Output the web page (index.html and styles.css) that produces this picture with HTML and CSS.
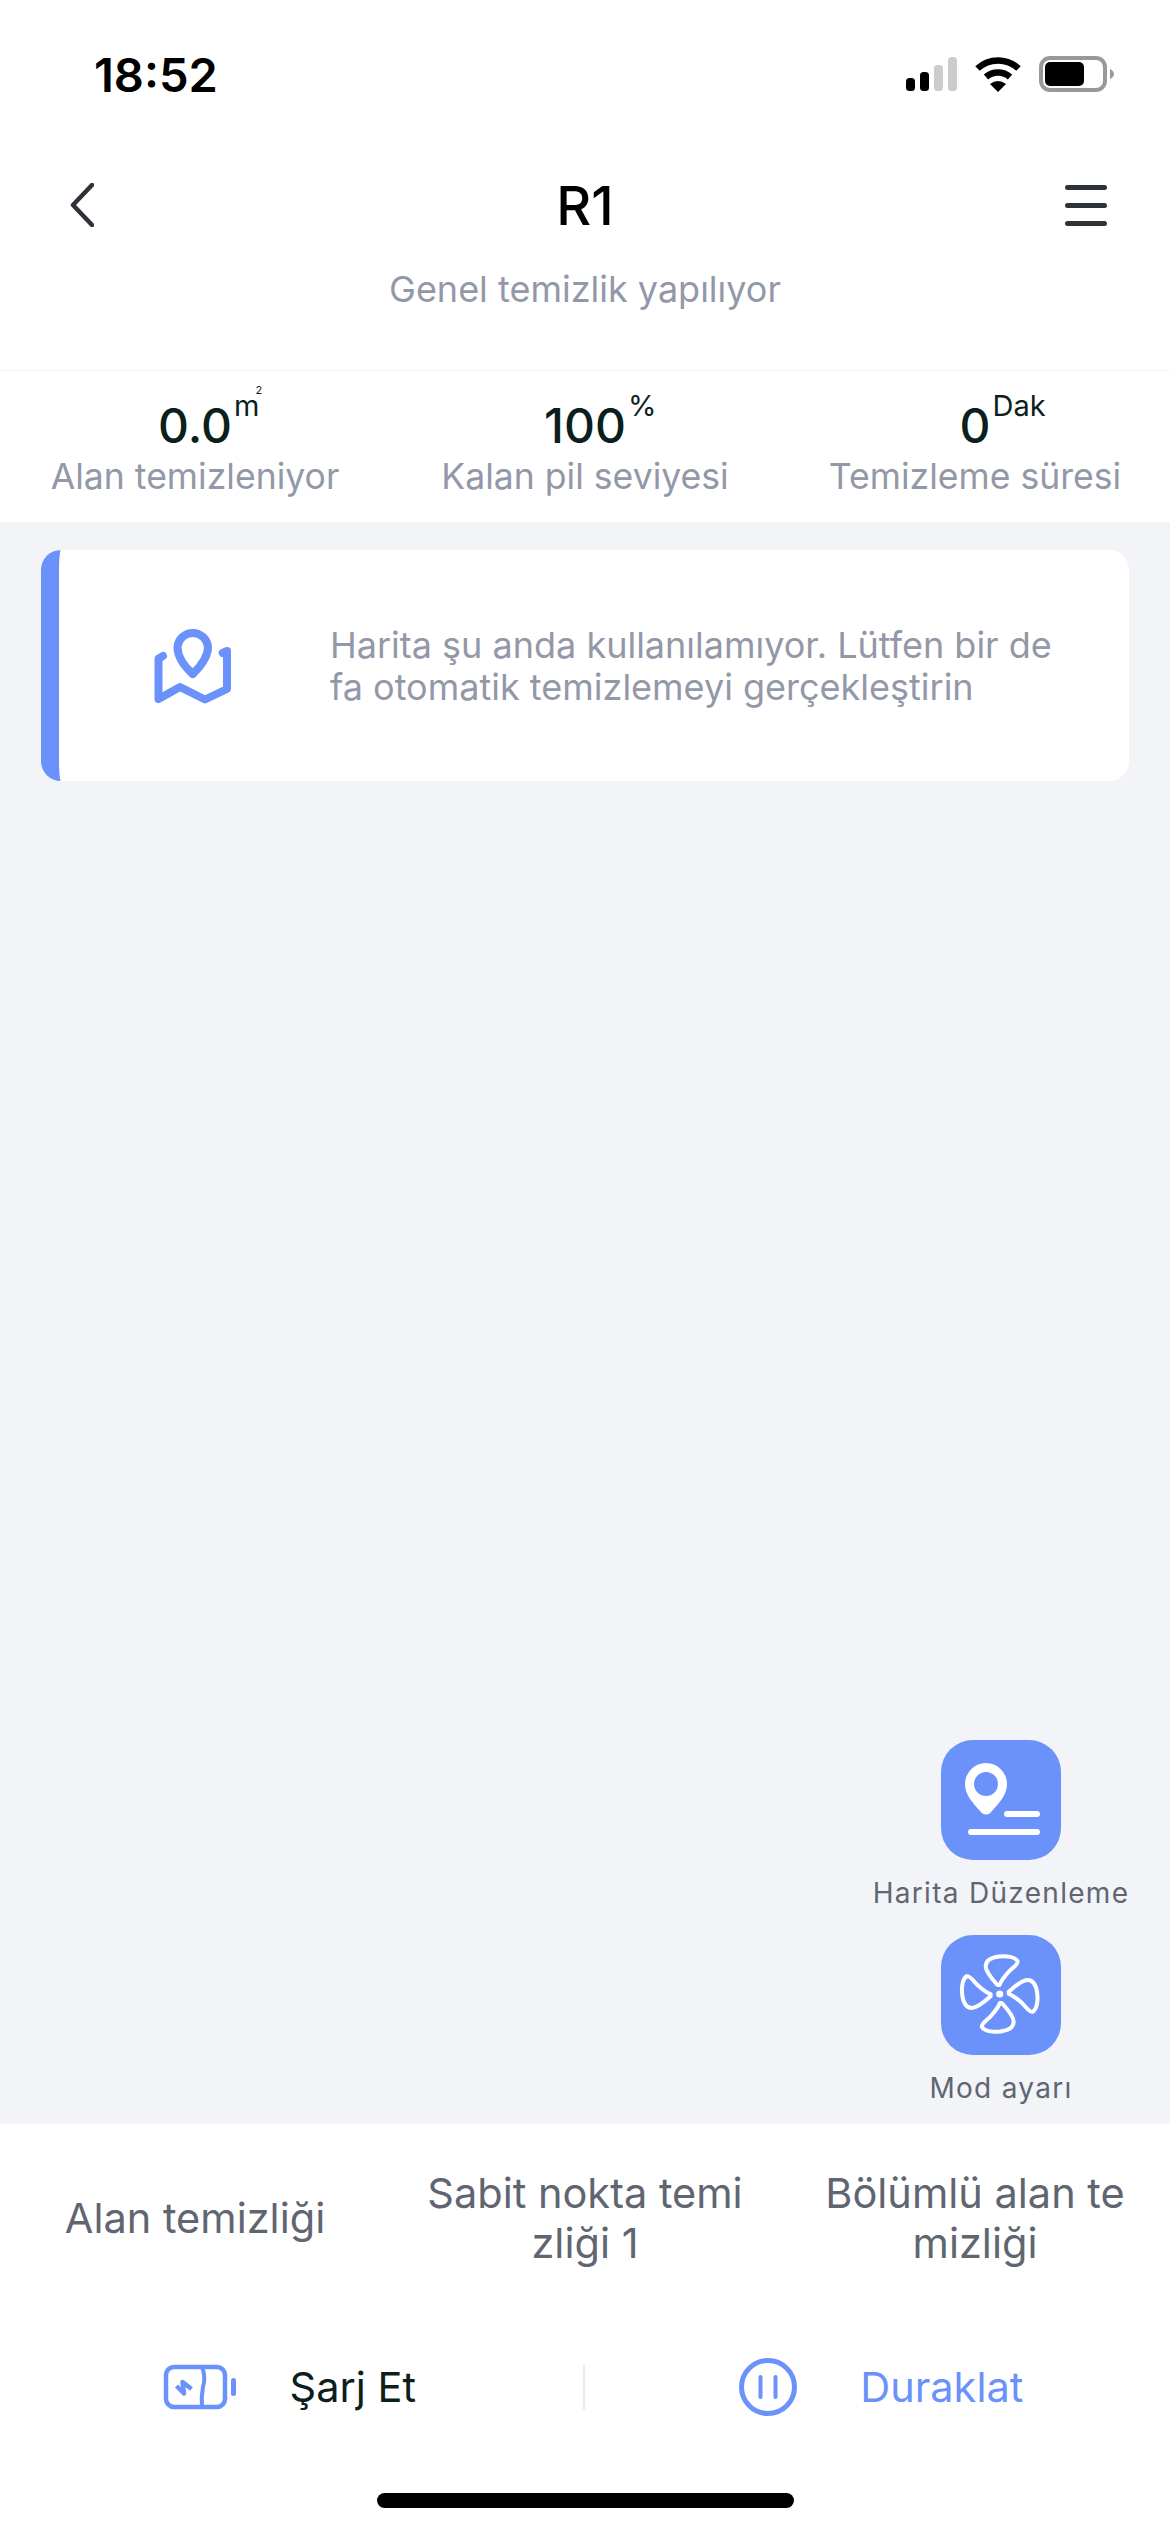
FILE: index.html
```html
<!DOCTYPE html>
<html lang="tr">
<head>
  <meta charset="UTF-8" />
  <meta name="viewport" content="width=device-width, initial-scale=1.0" />
  <title>R1</title>
  <link rel="stylesheet" href="styles.css">
</head>
<body>

<div class="page">
  <div class="status-bar">
    <span class="time">18:52</span>
    <div class="status-icons">
      <svg class="signal" width="51" height="34" viewBox="0 0 51 34">
        <rect x="0" y="21" width="9" height="13" rx="3.5" fill="#000" />
        <rect x="14" y="15" width="9" height="19" rx="3.5" fill="#000" />
        <rect x="28" y="8" width="9" height="26" rx="3.5" fill="#ccc" />
        <rect x="42" y="0" width="9" height="34" rx="3.5" fill="#ccc" />
      </svg>
      <svg class="wifi" width="48" height="36" viewBox="0 0 48 36">
        <path d="M3.5 12.5 A30 30 0 0 1 44.5 12.5" fill="none" stroke="#000" stroke-width="6.5" />
        <path d="M12 21 A18 18 0 0 1 36 21" fill="none" stroke="#000" stroke-width="6.5" />
        <path d="M24 36 L16 28 Q24 22 32 28 Z" fill="#000" />
      </svg>
      <svg class="battery" width="76" height="36" viewBox="0 0 76 36">
        <rect x="2" y="2" width="64" height="32" rx="9" fill="none" stroke="#999" stroke-width="4" />
        <rect x="6" y="6" width="39" height="24" rx="5" fill="#000" />
        <path d="M71 13 Q75 15 75 18 Q75 21 71 23 Z" fill="#999" />
      </svg>
    </div>
  </div>

  <div class="header">
    <div class="title-row">
      <svg class="back" width="24" height="44" viewBox="0 0 24 44">
        <path d="M22 2 L3 22 L22 42" fill="none" stroke="#2d3338" stroke-width="4.5" stroke-linecap="round" stroke-linejoin="round" />
      </svg>
      <h1 class="title">R1</h1>
      <div class="menu">
        <span></span>
        <span></span>
        <span></span>
      </div>
    </div>
    <p class="subtitle">Genel temizlik yapılıyor</p>
  </div>

  <div class="stats">
    <div class="stat">
      <div class="stat-value"><span class="num">0.0<span class="unit">m<span class="unit-exp">2</span></span></span></div>
      <div class="stat-label">Alan temizleniyor</div>
    </div>
    <div class="stat">
      <div class="stat-value"><span class="num">100<span class="unit">%</span></span></div>
      <div class="stat-label">Kalan pil seviyesi</div>
    </div>
    <div class="stat">
      <div class="stat-value"><span class="num">0<span class="unit">Dak</span></span></div>
      <div class="stat-label">Temizleme süresi</div>
    </div>
  </div>

  <div class="main">
    <div class="notice">
      <svg class="notice-icon" width="78" height="80" viewBox="24 27 78 80">
        <path d="M62.7 75 C55 68 47.5 58 47.5 48 A15.3 15.3 0 0 1 78 48 C78 58 70 68 62.7 75 Z" fill="none" stroke="#6a92fa" stroke-width="8" stroke-linejoin="round" />
        <path d="M33 57 L28.5 59.5 L28.5 100 L50 88 L75 100.5 L97 90 L97 52 L92.7 54" fill="none" stroke="#6a92fa" stroke-width="8" stroke-linecap="round" stroke-linejoin="round" />
      </svg>
      <p class="notice-text">Harita şu anda kullanılamıyor. Lütfen bir de<br>fa otomatik temizlemeyi gerçekleştirin</p>
    </div>

    <div class="tools">
      <div class="tool">
        <div class="tool-btn">
          <svg width="120" height="120" viewBox="0 0 120 120">
            <path fill-rule="evenodd" fill="#fff" d="M45 74.5 C42 74.5 41 73 39 71 C32 63 24 55 24 44 A21 21 0 0 1 66 44 C66 55 58 63 51 71 C49 73 48 74.5 45 74.5 Z M45 32 A12 12 0 1 0 45 56 A12 12 0 1 0 45 32 Z" />
            <rect x="63" y="71" width="36" height="6" rx="3" fill="#fff" />
            <rect x="27" y="89" width="72" height="6" rx="3" fill="#fff" />
          </svg>
        </div>
        <span class="tool-label">Harita Düzenleme</span>
      </div>
      <div class="tool">
        <div class="tool-btn">
          <svg width="120" height="120" viewBox="0 0 120 120">
            <g fill="none" stroke="#fff" stroke-width="4" stroke-linejoin="round">
              <path d="M56.5 50 C52 45 44.5 37 44.7 31 C45 25 50 22.5 58 21.5 C66 20.5 74 22 76.5 26 C77.5 29.5 71 33 67.5 37 C63 42 60 46 58.5 50 Z" />
              <path transform="rotate(90 58.7 59)" d="M56.5 50 C52 45 44.5 37 44.7 31 C45 25 50 22.5 58 21.5 C66 20.5 74 22 76.5 26 C77.5 29.5 71 33 67.5 37 C63 42 60 46 58.5 50 Z" />
              <path transform="rotate(180 58.7 59)" d="M56.5 50 C52 45 44.5 37 44.7 31 C45 25 50 22.5 58 21.5 C66 20.5 74 22 76.5 26 C77.5 29.5 71 33 67.5 37 C63 42 60 46 58.5 50 Z" />
              <path transform="rotate(270 58.7 59)" d="M56.5 50 C52 45 44.5 37 44.7 31 C45 25 50 22.5 58 21.5 C66 20.5 74 22 76.5 26 C77.5 29.5 71 33 67.5 37 C63 42 60 46 58.5 50 Z" />
            </g>
            <circle cx="58.7" cy="59" r="3.6" fill="#fff" />
          </svg>
        </div>
        <span class="tool-label">Mod ayarı</span>
      </div>
    </div>
  </div>

  <div class="tabs">
    <div class="tab">Alan temizliği</div>
    <div class="tab">Sabit nokta temi<br>zliği 1</div>
    <div class="tab">Bölümlü alan te<br>mizliği</div>
  </div>

  <div class="actions">
    <div class="action action-charge">
      <svg width="74" height="48" viewBox="13 22 74 48">
        <rect x="17" y="26" width="59" height="40" rx="8" fill="none" stroke="#6a92fa" stroke-width="4.5" />
        <path d="M53 26 Q57 36 54 46 Q52 56 53 66" fill="none" stroke="#6a92fa" stroke-width="4" />
        <path d="M27.5 45 L35 52.5 L33.5 41 L42.5 48" fill="none" stroke="#6a92fa" stroke-width="4.5" stroke-linejoin="round" />
        <rect x="82" y="37" width="5" height="18" rx="2.5" fill="#6a92fa" />
      </svg>
      <span class="action-text">Şarj Et</span>
    </div>
    <div class="action-sep"></div>
    <div class="action action-pause">
      <svg width="58" height="58" viewBox="0 0 58 58">
        <circle cx="29" cy="29" r="26.5" fill="none" stroke="#6a92fa" stroke-width="5" />
        <path d="M21.5 19 V39 M36.5 19 V39" fill="none" stroke="#6a92fa" stroke-width="4" stroke-linecap="round" />
      </svg>
      <span class="action-text blue">Duraklat</span>
    </div>
  </div>

  <div class="home-bar"></div>
</div>

</body>
</html>
```

FILE: styles.css
```css
* {
  box-sizing: border-box;
}

body {
  font-family: 'Inter', 'Liberation Sans', sans-serif;
  margin: 0;
  padding: 0;
  background: #fff;
  color: #0c1f1c;
}

.page {
  display: flex;
  flex-direction: column;
  height: 2532px;
}

/* status bar */
.status-bar {
  height: 148px;
  display: flex;
  align-items: center;
  justify-content: space-between;
  padding: 0 55px 0 94px;
}

.time {
  font-size: 47px;
  font-weight: 600;
  color: #000;
}

.status-icons {
  display: flex;
  align-items: center;
  gap: 17px;
}

/* header */
.header {
  border-bottom: 1px solid #f2f3f5;
  padding-bottom: 54px;
}

.title-row {
  height: 114px;
  display: grid;
  grid-template-columns: 1fr auto 1fr;
  align-items: center;
  padding: 0 63px;
}

.back {
  margin-left: 7px;
}

.title {
  margin: 0;
  font-size: 54px;
  font-weight: 500;
  color: #000;
}

.menu {
  justify-self: end;
  width: 42px;
  display: flex;
  flex-direction: column;
  gap: 13px;
}

.menu span {
  display: block;
  height: 5px;
  border-radius: 3px;
  background: #2d3338;
}

.subtitle {
  margin: 0;
  font-size: 36px;
  line-height: 54px;
  text-align: center;
  color: #9398a8;
}

/* stats */
.stats {
  display: grid;
  grid-template-columns: repeat(3, 1fr);
  padding: 27px 0 22px;
}

.stat {
  text-align: center;
}

.stat-value {
  font-size: 48px;
  line-height: 56px;
  font-weight: 500;
}

.num {
  position: relative;
}

.unit {
  position: absolute;
  left: 100%;
  top: -8px;
  margin-left: 2px;
  font-size: 29px;
  line-height: 36px;
  font-weight: 400;
}

.unit-exp {
  position: absolute;
  left: 100%;
  top: -8px;
  margin-left: -4px;
  font-size: 11px;
  line-height: 20px;
}

.stat-label {
  font-size: 35.6px;
  line-height: 46px;
  color: #9398a8;
}

/* map area */
.main {
  flex: 1;
  display: flex;
  flex-direction: column;
  justify-content: space-between;
  background: #f2f4f8;
  padding: 28px 41px 18px;
}

.notice {
  height: 231px;
  display: flex;
  align-items: center;
  gap: 98px;
  padding-left: 95px;
  background: #fff;
  border-left: 18px solid #6a92fa;
  border-radius: 20px;
}

.notice-text {
  margin: 0;
  font-size: 36px;
  line-height: 42px;
  color: #9398a8;
}

.tools {
  align-self: flex-end;
  width: 256px;
  display: flex;
  flex-direction: column;
  gap: 24px;
}

.tool {
  display: flex;
  flex-direction: column;
  align-items: center;
}

.tool-btn {
  width: 120px;
  height: 120px;
  border-radius: 32px;
  background: #6a92fa;
}

.tool-btn svg {
  display: block;
}

.tool-label {
  margin-top: 15px;
  font-size: 28px;
  line-height: 36px;
  letter-spacing: 1.3px;
  white-space: nowrap;
  color: #5f6672;
}

/* bottom */
.tabs {
  display: grid;
  grid-template-columns: repeat(3, 1fr);
  align-items: center;
  padding-top: 44px;
}

.tab {
  font-size: 41.5px;
  line-height: 50px;
  text-align: center;
  color: #5f6672;
}

.actions {
  height: 100px;
  margin-top: 69px;
  display: flex;
  align-items: center;
}

.action {
  flex: 1;
  display: flex;
  align-items: center;
  justify-content: center;
  gap: 54px;
}

.action-charge {
  padding-right: 5px;
}

.action-pause {
  gap: 63px;
  padding-left: 8px;
}

.action-sep {
  width: 2px;
  height: 45px;
  background: #e8ecf2;
}

.action-text {
  font-size: 41.5px;
}

.blue {
  color: #6a92fa;
}

.home-bar {
  flex-shrink: 0;
  width: 417px;
  height: 15px;
  margin: 56px auto 24px;
  border-radius: 8px;
  background: #000;
}
```
